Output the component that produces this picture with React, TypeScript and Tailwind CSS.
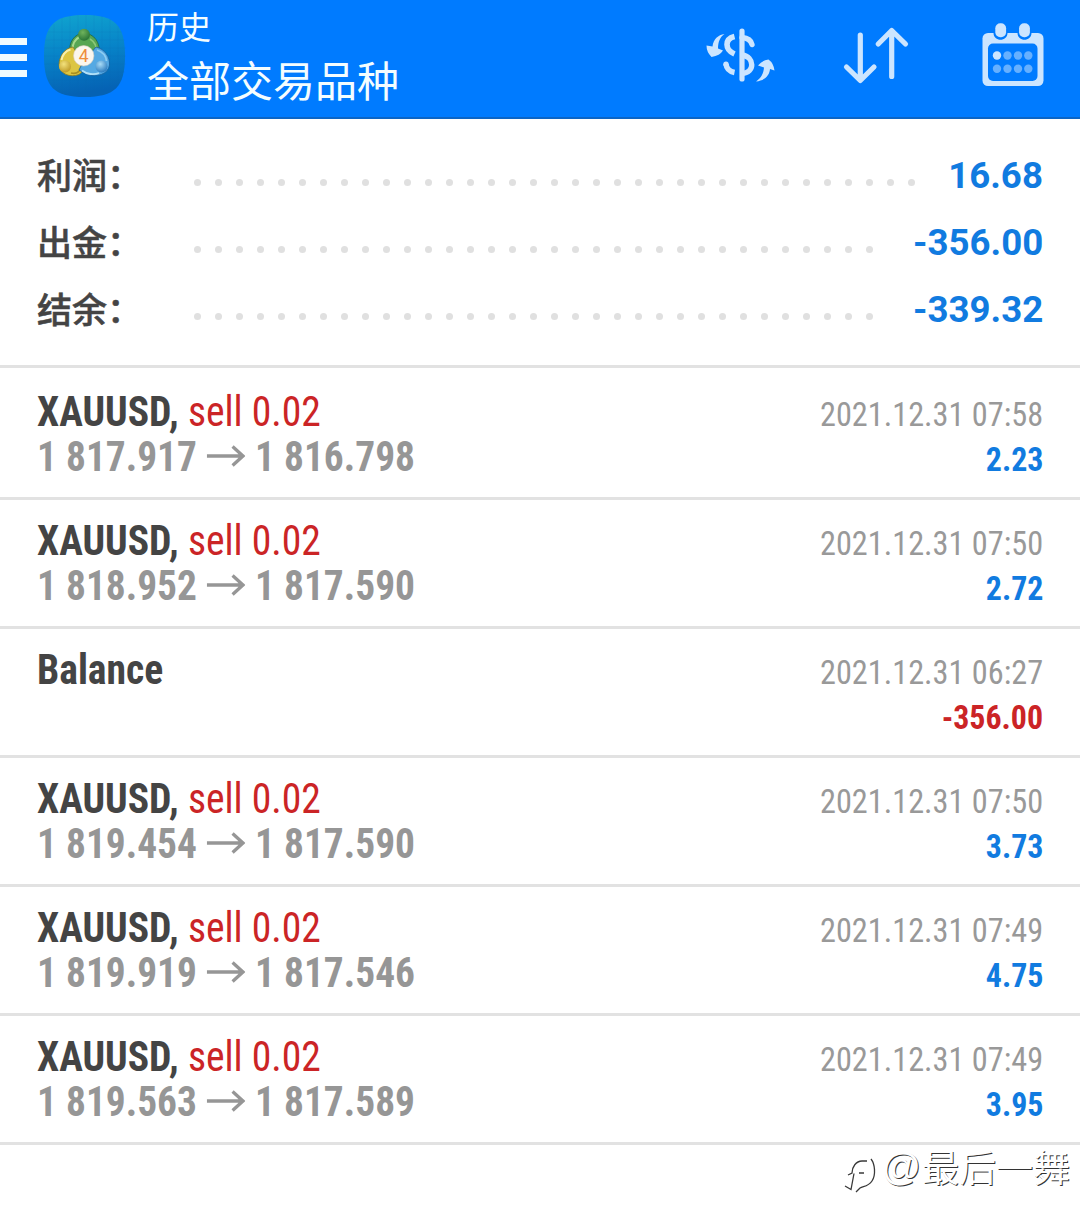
import React from 'react';

type Deal = {
  symbol: string;
  side?: string;
  from?: string;
  to?: string;
  time: string;
  value: string;
};

const deals: Deal[] = [
  { symbol: 'XAUUSD', side: 'sell 0.02', from: '1 817.917', to: '1 816.798', time: '2021.12.31 07:58', value: '2.23' },
  { symbol: 'XAUUSD', side: 'sell 0.02', from: '1 818.952', to: '1 817.590', time: '2021.12.31 07:50', value: '2.72' },
  { symbol: 'Balance', time: '2021.12.31 06:27', value: '-356.00' },
  { symbol: 'XAUUSD', side: 'sell 0.02', from: '1 819.454', to: '1 817.590', time: '2021.12.31 07:50', value: '3.73' },
  { symbol: 'XAUUSD', side: 'sell 0.02', from: '1 819.919', to: '1 817.546', time: '2021.12.31 07:49', value: '4.75' },
  { symbol: 'XAUUSD', side: 'sell 0.02', from: '1 819.563', to: '1 817.589', time: '2021.12.31 07:49', value: '3.95' },
];

const summary = [
  { label: '利润', value: '16.68', dots: 35 },
  { label: '出金', value: '-356.00', dots: 33 },
  { label: '结余', value: '-339.32', dots: 33 },
];

function AppLogo() {
  return (
    <svg className="ml-[16px] h-[84px] w-[84px] shrink-0" viewBox="0 0 84 84">
      <defs>
        <linearGradient id="tile" x1="0" y1="0" x2="0.15" y2="1">
          <stop offset="0" stopColor="#10a5cf" />
          <stop offset="0.5" stopColor="#0783c8" />
          <stop offset="1" stopColor="#0562b4" />
        </linearGradient>
        <radialGradient id="green" cx="0.4" cy="0.3" r="0.8">
          <stop offset="0" stopColor="#6fb35c" />
          <stop offset="1" stopColor="#1f6b30" />
        </radialGradient>
        <radialGradient id="yellow" cx="0.4" cy="0.3" r="0.8">
          <stop offset="0" stopColor="#f3e27c" />
          <stop offset="1" stopColor="#b8921c" />
        </radialGradient>
        <radialGradient id="blue" cx="0.4" cy="0.3" r="0.8">
          <stop offset="0" stopColor="#a9dcf7" />
          <stop offset="1" stopColor="#1c6fb8" />
        </radialGradient>
      </defs>
      <path d="M41.500 1C72 1 82 11 82 42S72 83 41.500 83 1 73 1 42 11 1 41.500 1Z" fill="url(#tile)" />
      <path d="M11 10v64M19 4v76M27 2v80M35 1v82M43 1v82M51 1v82M59 2v80M67 5v74M75 12v60M5 18h74M2 26h80M1 34h82M1 42h82M1 50h82M2 58h80M5 66h74" stroke="#0b6fb0" strokeOpacity="0.2" strokeWidth="0.7" />
      <path d="M27 40C25 28 32 19 41 19.500 51 19 58 29 56 41l-6 1H33Z" fill="#57a653" stroke="#1f6440" strokeWidth="0.8" />
      <path d="M29.500 36c0-7 3-11 7-13" fill="none" stroke="#a8d98c" strokeWidth="2" />
      <path d="M47 25c5 3 7 8 6.500 14" fill="none" stroke="#8cc878" strokeWidth="1.600" />
      <path d="M30 33c-8 1-14 9-14 18 1 9 11 13 20 9.500l3.500-3V48Z" fill="#dcc541" stroke="#857822" strokeWidth="0.8" />
      <path d="M18.500 46c1-5 4-9 9-10.500" fill="none" stroke="#f7efac" strokeWidth="2" />
      <path d="M28 59c4 1 7 0 9-3" fill="none" stroke="#a88f22" strokeWidth="1.600" />
      <path d="M53 33c9 2 14 10 13.500 18-1 9-13 13-23 9.500L36 56l4-8Z" fill="#55a9e3" stroke="#185f9c" strokeWidth="0.8" />
      <path d="M39 56.500c5 4 12 4.500 17 2.500" fill="none" stroke="#b2e0f7" strokeWidth="1.800" />
      <path d="M54 36c6 2 9 6 9.500 11" fill="none" stroke="#8fccf1" strokeWidth="1.800" />
      <circle cx="41" cy="20.800" r="6" fill="url(#green)" />
      <circle cx="22" cy="52.500" r="6" fill="url(#yellow)" />
      <circle cx="58.500" cy="52.500" r="6" fill="url(#blue)" />
      <circle cx="40.700" cy="41.800" r="10.200" fill="#fbf6ee" stroke="#d8cfbf" strokeWidth="0.6" />
      <text x="40.700" y="48" textAnchor="middle" fontFamily="Roboto, sans-serif" fontSize="17.500" fill="#ee8e3c">4</text>
    </svg>
  );
}

function CurrencyIcon() {
  return (
    <svg className="h-[60px] w-[72px]" viewBox="0 0 72 60">
      <g fill="none" stroke="#cce5ff">
        <path d="M36 5v48" strokeWidth="5.2" strokeLinecap="round" />
        <path d="M28.500 10.500C18.500 13 18.500 23.500 28.500 28" strokeWidth="5.600" />
        <path d="M36 11.500C42 12 45 14 46 18.500" strokeWidth="5.400" strokeLinecap="round" />
        <path d="M36 29C49 31 49 47 36 47.500" strokeWidth="5.400" />
        <path d="M20 38C20.500 43 23.500 45.500 28.500 46.500" strokeWidth="5.400" />
      </g>
      <circle cx="20" cy="38.300" r="2.700" fill="#cce5ff" />
      <g fill="#cce5ff">
        <path d="M18.500 8C12 9 7.500 13 6.500 20.500L0.500 19.500Q.5 26 5.500 31Q14 29.500 17 24.500L12 22.500C12 16 14 11 18.500 8Z" />
        <path d="M50 55.500C59.500 54.500 63.500 49 64 43L68.500 44.500Q67.500 37 62.500 33.500Q56.500 34 52 39.500L58 41.500C57.500 47 55.500 52 50 55.500Z" />
      </g>
    </svg>
  );
}

function SortIcon() {
  return (
    <svg className="h-[60px] w-[68px]" viewBox="0 0 68 60" fill="none" stroke="#cce5ff" strokeWidth="5.2" strokeLinecap="round" strokeLinejoin="round">
      <path d="M18.300 9v45M4.500 41l13.800 13.500L32 41M49.700 50.500V4.500M36.200 18l13.500-13.500L63.500 18" />
    </svg>
  );
}

function CalendarIcon() {
  return (
    <svg className="h-[66px] w-[62px]" viewBox="0 0 62 66">
      <rect x="0.500" y="11" width="61" height="53" rx="5.500" fill="#cce5ff" />
      <rect x="6" y="21.500" width="49.500" height="37.500" rx="5" fill="#007bff" />
      <path d="M11.500 9v2c0 9 14 9 14 0V9ZM35.500 9v2c0 9 14 9 14 0V9Z" fill="#007bff" />
      <rect x="13.300" y="1.300" width="10.800" height="14" rx="5" fill="#cce5ff" />
      <rect x="37.100" y="1.300" width="10.800" height="14" rx="5" fill="#cce5ff" />
      <circle cx="15" cy="33.500" r="4.200" fill="#cce5ff" />
      <g fill="#66b0ff">
        <circle cx="25.500" cy="33.500" r="4.200" />
        <circle cx="36" cy="33.500" r="4.200" />
        <circle cx="46.300" cy="33.500" r="4.200" />
        <circle cx="15" cy="46.700" r="4.200" />
        <circle cx="25.500" cy="46.700" r="4.200" />
        <circle cx="36" cy="46.700" r="4.200" />
        <circle cx="46.300" cy="46.700" r="4.200" />
      </g>
    </svg>
  );
}

function Arrow() {
  return (
    <svg className="mr-[10px] ml-[11px] inline-block h-[22px] w-[41px] align-[4px]" viewBox="0 0 41 22" fill="none" stroke="#969696" strokeWidth="3.600">
      <path d="M0 11h38.500M27.500 1.500L38.500 11 27.500 20.500" />
    </svg>
  );
}

function DealRow({ deal }: { deal: Deal }) {
  const negative = deal.value.startsWith('-');
  return (
    <li className="h-[129px] border-b-[3px] border-[#e2e2e2] pr-[37px] pl-[37px] pt-[18px] font-['Roboto_Condensed','Roboto',sans-serif] [font-stretch:75%]">
      <div className="flex h-[45px] items-baseline justify-between leading-[45px] whitespace-nowrap">
        <p className="origin-left scale-x-[0.943] text-[42px]">
          <span className="font-bold text-[#444444]">{deal.symbol}{deal.side && ','}</span>
          {deal.side && <span className="text-[#cb2426]"> {deal.side}</span>}
        </p>
        <time className="origin-right scale-x-[0.949] text-[34px] text-[#999999]">{deal.time}</time>
      </div>
      <div className="flex h-[45px] items-baseline justify-between leading-[45px] whitespace-nowrap">
        <p className="origin-left scale-x-[0.938] text-[42px] font-bold text-[#969696]">
          {deal.from ? <>{deal.from}<Arrow />{deal.to}</> : '\u00a0'}
        </p>
        <p className={negative ? 'origin-right scale-x-[0.938] text-[34px] font-bold text-[#cb2426]' : 'origin-right scale-x-[0.938] text-[34px] font-bold text-[#117be0]'}>{deal.value}</p>
      </div>
    </li>
  );
}

export default function App() {
  return (
    <main className="relative h-[1231px] w-[1080px] overflow-hidden bg-white font-['Roboto','Noto_Sans_CJK_SC',sans-serif]">
      <header className="flex h-[119px] items-start border-b-2 border-[#0b65c6] bg-[#007bff]">
        <div className="mt-[38px] flex w-[27px] flex-col gap-[9px]">
          <span className="h-[7px] bg-[#f0fbff]" />
          <span className="h-[7px] bg-[#f0fbff]" />
          <span className="h-[7px] bg-[#f0fbff]" />
        </div>
        <div className="mt-[14px]"><AppLogo /></div>
        <div className="ml-[20px] text-[#f4fdff]">
          <p className="mt-[5px] h-[48px] text-[32px] leading-[46px]">历史</p>
          <p className="h-[60px] text-[42px] leading-[60px]">全部交易品种</p>
        </div>
        <div className="ml-auto mr-[36px] flex items-start">
          <div className="mt-[26px]"><CurrencyIcon /></div>
          <div className="mt-[26px] ml-[64px]"><SortIcon /></div>
          <div className="mt-[22px] ml-[72px]"><CalendarIcon /></div>
        </div>
      </header>

      <section className="h-[249px] border-b-[3px] border-[#e2e2e2] pt-[23px]">
        {summary.map((item) => (
          <div key={item.label} className="flex h-[67px] items-center pr-[37px] pl-[37px]">
            <p className="w-[156.500px] pt-[3px] text-[35px] leading-[67px] font-medium text-[#444444] [-webkit-text-stroke:0.5px_#444444]">{item.label}：</p>
            <div className="flex gap-[14px] pt-[14px]">
              {Array.from({ length: item.dots }, (_, i) => (
                <span key={i} className="size-[7px] rounded-full bg-[#e0e0e0]" />
              ))}
            </div>
            <p className="ml-auto origin-right scale-x-[0.978] text-[37.500px] leading-[67px] font-bold text-[#117be0]">{item.value}</p>
          </div>
        ))}
      </section>

      <ul className="pt-[3px]">
        {deals.map((deal, i) => (
          <DealRow key={i} deal={deal} />
        ))}
      </ul>

      <div className="absolute top-[1143px] right-[10px] flex items-center text-white">
        <svg className="mt-[13px] mr-[3px] h-[40px] w-[36px]" viewBox="0 0 36 40" fill="none" stroke="#3a3a3a" strokeWidth="1.300">
          <path d="M3 30l6 3.500 3-16M6 19l4-2c0-6 4-12 10-12h5M17 17h5M29 3c4 5 5 16 1 22-4 6-9 5-12 7l-4 4" />
        </svg>
        <p className="flex items-baseline text-[37px] leading-[50px] [text-shadow:1px_1px_0.5px_#333333]">
          <span className="relative -top-[2px] mr-px font-['Liberation_Sans'] text-[39px]">@</span>最后一舞
        </p>
      </div>
    </main>
  );
}
